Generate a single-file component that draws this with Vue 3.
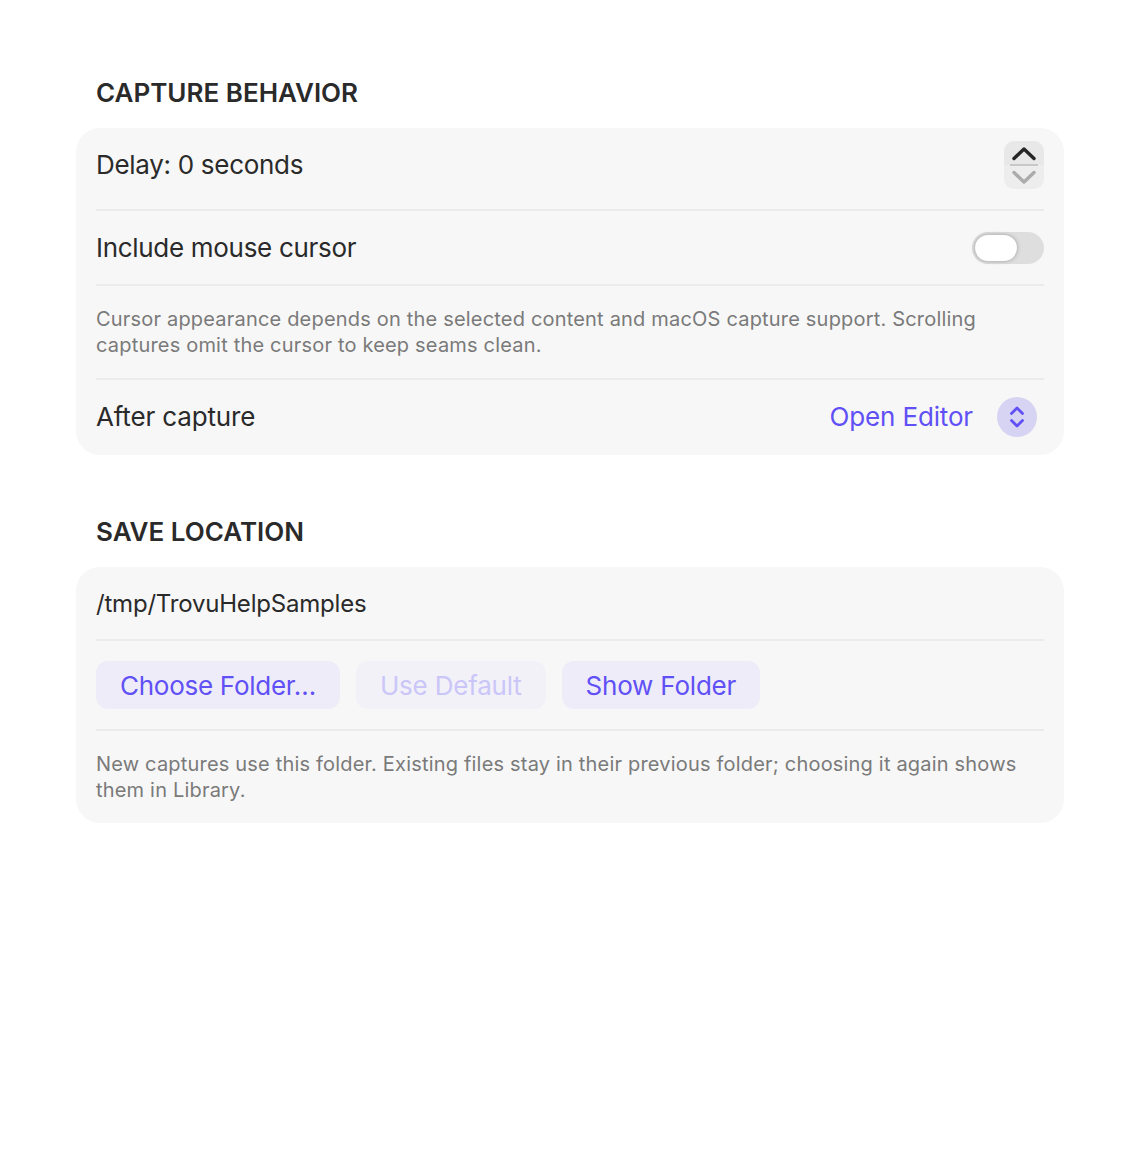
<script setup>
const buttons = [
  { label: 'Choose Folder…', disabled: false, tight: true },
  { label: 'Use Default', disabled: true },
  { label: 'Show Folder', disabled: false },
];
</script>

<template>
  <div class="page">
    <section class="section">
      <h2>CAPTURE BEHAVIOR</h2>
      <div class="card">
        <div class="row delay">
          <span>Delay: 0 seconds</span>
          <div class="stepper">
            <svg class="step" width="40" height="23" viewBox="0 0 40 23">
              <path d="M10 17.500 L20 8 L30 17.500" fill="none" stroke="#262626" stroke-width="3.400" stroke-linecap="round" stroke-linejoin="round" />
            </svg>
            <div class="step-line"></div>
            <svg class="step" width="40" height="23" viewBox="0 0 40 23">
              <path d="M10 6.500 L20 16 L30 6.500" fill="none" stroke="#ababab" stroke-width="3.400" stroke-linecap="round" stroke-linejoin="round" />
            </svg>
          </div>
        </div>
        <div class="sep"></div>
        <div class="row cursor">
          <span>Include mouse cursor</span>
          <div class="toggle"><div class="knob"></div></div>
        </div>
        <div class="sep"></div>
        <p class="note first">Cursor appearance depends on the selected content and macOS capture support. Scrolling captures omit the cursor to keep seams clean.</p>
        <div class="sep"></div>
        <div class="row after">
          <span>After capture</span>
          <div class="picker">
            <span class="picker-value">Open Editor</span>
            <div class="picker-icon">
              <svg width="40" height="40" viewBox="0 0 40 40">
                <path d="M14.5 16.5 L20 11 L25.500 16.500 M14.5 23.500 L20 29 L25.500 23.500" fill="none" stroke="#6050f5" stroke-width="2.800" stroke-linecap="round" stroke-linejoin="round" />
              </svg>
            </div>
          </div>
        </div>
      </div>
    </section>

    <section class="section second">
      <h2>SAVE LOCATION</h2>
      <div class="card">
        <div class="row path">
          <span>/tmp/TrovuHelpSamples</span>
        </div>
        <div class="sep"></div>
        <div class="buttons">
          <button v-for="b in buttons" :key="b.label" class="btn" :class="{ disabled: b.disabled, tight: b.tight }">{{ b.label }}</button>
        </div>
        <div class="sep"></div>
        <p class="note last">New captures use this folder. Existing files stay in their previous folder; choosing it again shows them in Library.</p>
      </div>
    </section>
  </div>
</template>

<style scoped>
.page {
  width: 1140px;
  height: 1160px;
  box-sizing: border-box;
  padding: 76px 76px 0;
  background: #fff;
  font-family: Inter, "Liberation Sans", sans-serif;
  color: #2a2a2a;
}

.second {
  margin-top: 60px;
}

h2 {
  margin: 0 0 18px 20px;
  font-size: 26px;
  line-height: 34px;
  font-weight: 600;
  color: #2a2a2a;
}

.card {
  background: #f7f7f7;
  border-radius: 24px;
  padding: 0 20px;
  font-size: 26px;
  letter-spacing: -0.3px;
}

.row {
  display: flex;
  align-items: center;
  justify-content: space-between;
}

.delay {
  height: 81px;
  padding-bottom: 8px;
  box-sizing: border-box;
}

.cursor {
  height: 73px;
}

.after {
  height: 75px;
  padding-bottom: 2px;
  box-sizing: border-box;
  letter-spacing: -0.15px;
}

.path {
  height: 72px;
  font-size: 24px;
  letter-spacing: -0.2px;
}

.sep {
  height: 2px;
  background: #ebebeb;
}

.stepper {
  width: 40px;
  height: 48px;
  background: linear-gradient(#e8e8e8 50%, #ededed 50%);
  border-radius: 10px;
  display: flex;
  flex-direction: column;
  align-items: center;
  overflow: hidden;
}

.step {
  flex: none;
}

.step-line {
  flex: none;
  width: 28px;
  height: 2px;
  background: #c8c8c8;
}

.toggle {
  width: 72px;
  height: 32px;
  border-radius: 16px;
  background: #dedede;
  padding: 3px;
  box-sizing: border-box;
}

.knob {
  width: 42px;
  height: 26px;
  border-radius: 13px;
  background: #fff;
  box-shadow: 0 0 4px rgba(0, 0, 0, 0.3);
}

.note {
  margin: 0;
  font-size: 20px;
  line-height: 26px;
  letter-spacing: 0.19px;
  color: #7a7a7a;
}

.note.first {
  padding: 20px 0 20px;
}

.note.last {
  padding: 20px 0 20px;
}

.picker {
  display: flex;
  align-items: center;
  gap: 24px;
  padding-right: 7px;
}

.picker-value {
  color: #6050f5;
}

.picker-icon {
  width: 40px;
  height: 40px;
  border-radius: 50%;
  background: #d6d3f3;
}

.picker-icon svg {
  display: block;
}

.buttons {
  display: flex;
  gap: 16px;
  padding: 20px 0;
}

.btn {
  height: 48px;
  padding: 0 24px;
  border: none;
  border-radius: 12px;
  background: #eeecf8;
  color: #6050f5;
  font: inherit;
  letter-spacing: -0.2px;
}

.btn.tight {
  letter-spacing: -0.27px;
}

.btn.disabled {
  background: #f2f1f8;
  color: #cbc6f8;
}
</style>
